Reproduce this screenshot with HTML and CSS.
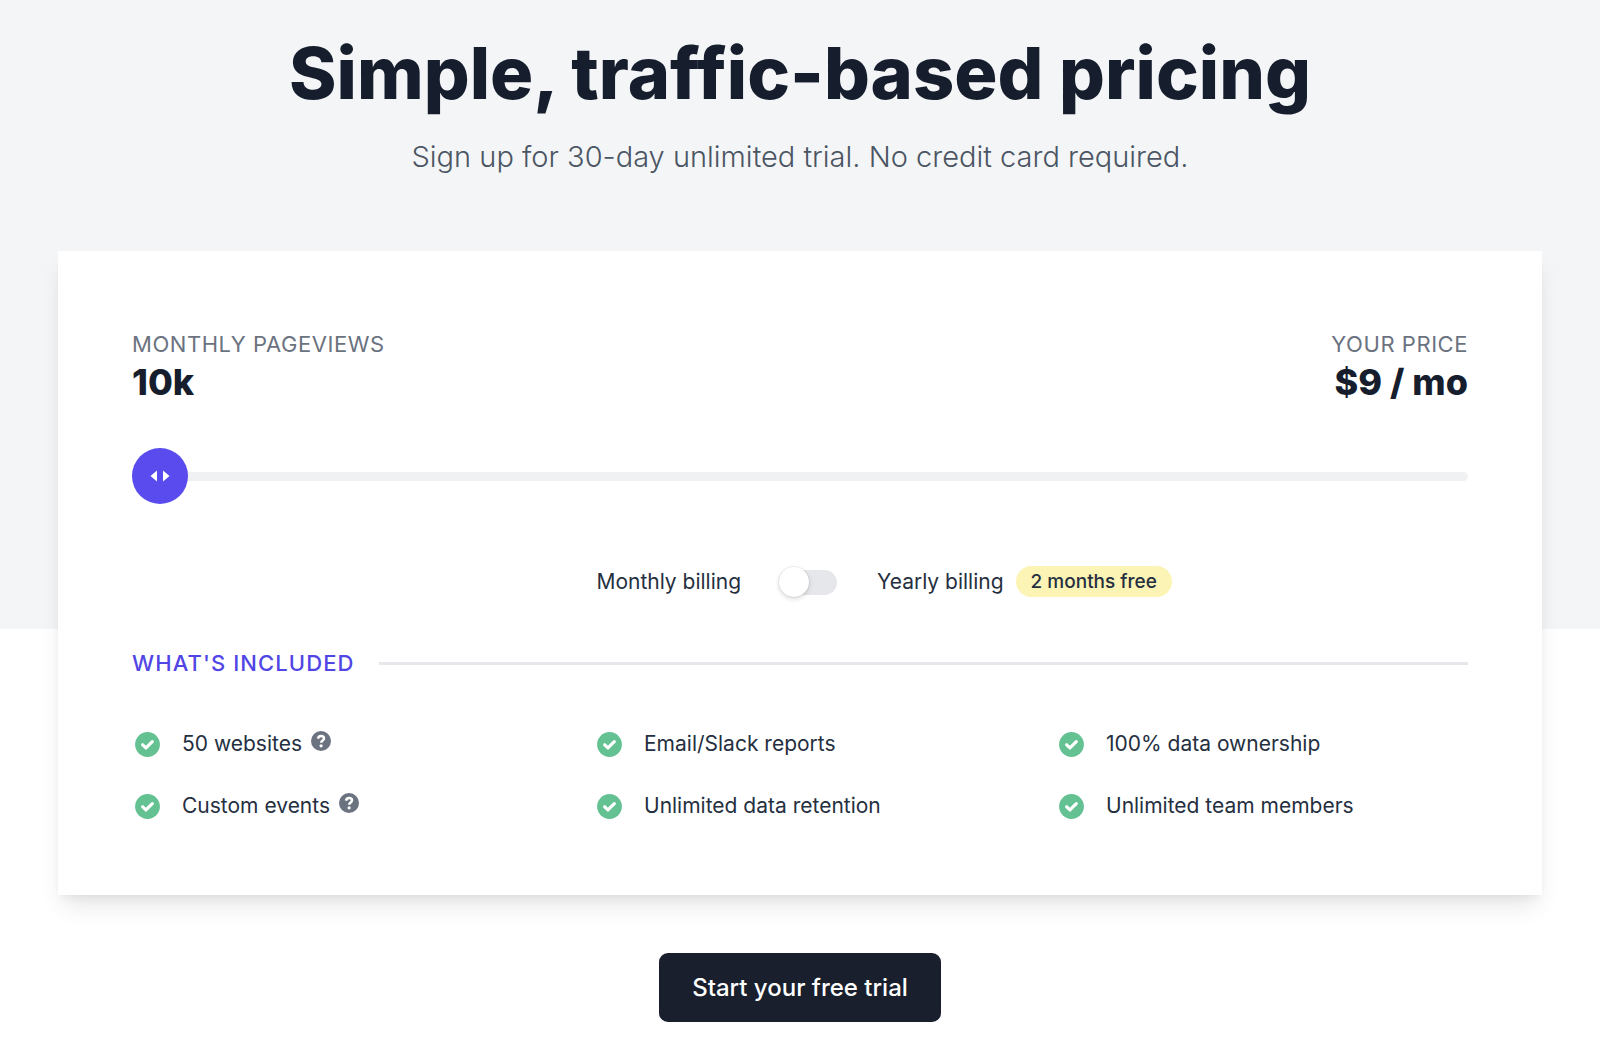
FILE: index.html
```html
<!DOCTYPE html>
<html lang="en">
<head>
    <meta charset="UTF-8">
    <meta name="viewport" content="width=device-width, initial-scale=1.0">
    <title>Simple, traffic-based pricing</title>
    <link rel="stylesheet" href="styles.css">
</head>
<body>
    <svg class="sprite" aria-hidden="true">
        <symbol id="check" viewBox="0 0 20 20">
            <circle cx="10" cy="10" r="8" fill="currentColor"/>
            <path d="M6.9 10.2l2.1 2 4.1-4" fill="none" stroke="#fff" stroke-width="2.1" stroke-linecap="round" stroke-linejoin="round"/>
        </symbol>
        <symbol id="question" viewBox="0 0 20 20">
            <circle cx="10" cy="10" r="10" fill="currentColor"/>
            <path d="M6.9 7.6C7.4 5.9 8.5 5.1 10.1 5.1c1.8 0 2.9 1 2.9 2.4 0 2-2.8 2-2.8 4.2" fill="none" stroke="#fff" stroke-width="2.5"/>
            <circle cx="10.1" cy="14.8" r="1.6" fill="#fff"/>
        </symbol>
    </svg>

    <main class="pricing">
        <header class="header">
            <h1>Simple, traffic-based pricing</h1>
            <p>Sign up for 30-day unlimited trial. No credit card required.</p>
        </header>

        <section class="card">
            <div class="summary">
                <div>
                    <label class="label" for="pageviews">Monthly pageviews</label>
                    <div class="amount">10k</div>
                </div>
                <div class="price">
                    <div class="label">Your price</div>
                    <div class="amount">$9 / mo</div>
                </div>
            </div>

            <input class="slider" type="range" id="pageviews" min="0" max="8" value="0">

            <div class="billing">
                <label for="yearly">Monthly billing</label>
                <input class="toggle" type="checkbox" id="yearly">
                <label class="yearly" for="yearly">Yearly billing <span class="badge">2 months free</span></label>
            </div>

            <h2 class="included">What's included</h2>

            <ul class="features">
                <li><svg class="check"><use href="#check"/></svg><span>50 websites</span><svg class="question"><use href="#question"/></svg></li>
                <li><svg class="check"><use href="#check"/></svg><span>Email/Slack reports</span></li>
                <li><svg class="check"><use href="#check"/></svg><span>100% data ownership</span></li>
                <li><svg class="check"><use href="#check"/></svg><span>Custom events</span><svg class="question"><use href="#question"/></svg></li>
                <li><svg class="check"><use href="#check"/></svg><span>Unlimited data retention</span></li>
                <li><svg class="check"><use href="#check"/></svg><span>Unlimited team members</span></li>
            </ul>
        </section>

        <a class="trial" href="#">Start your free trial</a>
    </main>
</body>
</html>
```
FILE: styles.css
```css
* {
    box-sizing: border-box;
}
body {
    margin: 0;
    font-family: Inter, "Liberation Sans", sans-serif;
    font-size: 21px;
    line-height: 32px;
    color: #252f3f;
    background-color: #fff;
}
h1, h2, p, ul {
    margin: 0;
    padding: 0;
}
.sprite {
    display: none;
}
.pricing {
    display: flex;
    flex-direction: column;
    align-items: center;
    padding: 35px 58px 22px;
    background: linear-gradient(#f4f5f7, #f4f5f7) no-repeat;
    background-size: 100% 629px;
}
.header {
    text-align: center;
}
.header h1 {
    font-size: 72px;
    line-height: 76px;
    font-weight: 800;
    color: #161e2e;
}
.header p {
    margin-top: 23px;
    font-size: 29px;
    line-height: 46px;
    font-weight: 350;
    color: #4b5563;
}
.card {
    width: 100%;
    margin-top: 71px;
    padding: 77px 74px 73px;
    background-color: #fff;
    box-shadow: 0 15px 23px -5px rgba(0, 0, 0, 0.1), 0 6px 9px -3px rgba(0, 0, 0, 0.05);
}
.summary {
    display: flex;
    justify-content: space-between;
}
.price {
    text-align: right;
}
.label {
    display: block;
    font-size: 22px;
    letter-spacing: 0.025em;
    text-transform: uppercase;
    color: #6b7280;
}
.amount {
    font-size: 36px;
    line-height: 44px;
    font-weight: 800;
    color: #161e2e;
}
.slider {
    display: block;
    width: 100%;
    height: 56px;
    margin: 44px 0 0;
    appearance: none;
    background: none;
    cursor: pointer;
}
.slider::-webkit-slider-runnable-track {
    height: 9px;
    border-radius: 5px;
    background-color: #f0f1f3;
}
.slider::-webkit-slider-thumb {
    appearance: none;
    width: 56px;
    height: 56px;
    margin-top: -24px;
    border-radius: 50%;
    background: #5a4bee url("data:image/svg+xml,%3Csvg xmlns='http://www.w3.org/2000/svg' viewBox='0 0 56 56' fill='%23fff'%3E%3Cpath d='M18.5 28l6.5-5.5v11zM37.5 28L31 22.500v11z'/%3E%3C/svg%3E") center / cover;
}
.billing {
    display: flex;
    justify-content: center;
    align-items: center;
    margin-top: 62px;
}
.toggle {
    appearance: none;
    display: flex;
    align-items: center;
    width: 58px;
    height: 25px;
    margin: 0 40px 0 38px;
    border-radius: 13px;
    background-color: #e5e7eb;
    cursor: pointer;
}
.toggle::before {
    content: "";
    width: 30px;
    height: 30px;
    border-radius: 50%;
    background-color: #fff;
    box-shadow: 0 0 0 1px rgba(0, 0, 0, 0.05), 0 2px 5px rgba(0, 0, 0, 0.15);
}
.toggle:checked {
    justify-content: flex-end;
    background-color: #5a4bee;
}
.yearly {
    position: relative;
}
.badge {
    position: absolute;
    top: 0;
    left: 100%;
    margin-left: 12px;
    padding: 0 15px;
    border-radius: 16px;
    font-size: 19px;
    line-height: 31px;
    font-weight: 500;
    white-space: nowrap;
    background-color: #fcf4b5;
}
.included {
    display: flex;
    align-items: center;
    gap: 25px;
    margin-top: 49px;
    font-size: 22px;
    font-weight: 500;
    letter-spacing: 0.05em;
    text-transform: uppercase;
    color: #5145e5;
}
.included::after {
    content: "";
    flex: 1;
    height: 3px;
    background-color: #e5e7eb;
}
.features {
    display: grid;
    grid-template-columns: repeat(3, 1fr);
    gap: 30px 50px;
    margin-top: 49px;
    list-style: none;
}
.features li {
    display: flex;
    align-items: center;
}
.check {
    width: 31px;
    height: 31px;
    margin-right: 19px;
    color: #63c192;
}
.question {
    width: 20px;
    height: 20px;
    margin: 0 0 6px 9px;
    color: #6b7280;
}
.trial {
    margin-top: 58px;
    padding: 18px 33px;
    border-radius: 9px;
    font-size: 24px;
    line-height: 33px;
    font-weight: 500;
    text-decoration: none;
    color: #fff;
    background-color: #1a1f2e;
}
```
